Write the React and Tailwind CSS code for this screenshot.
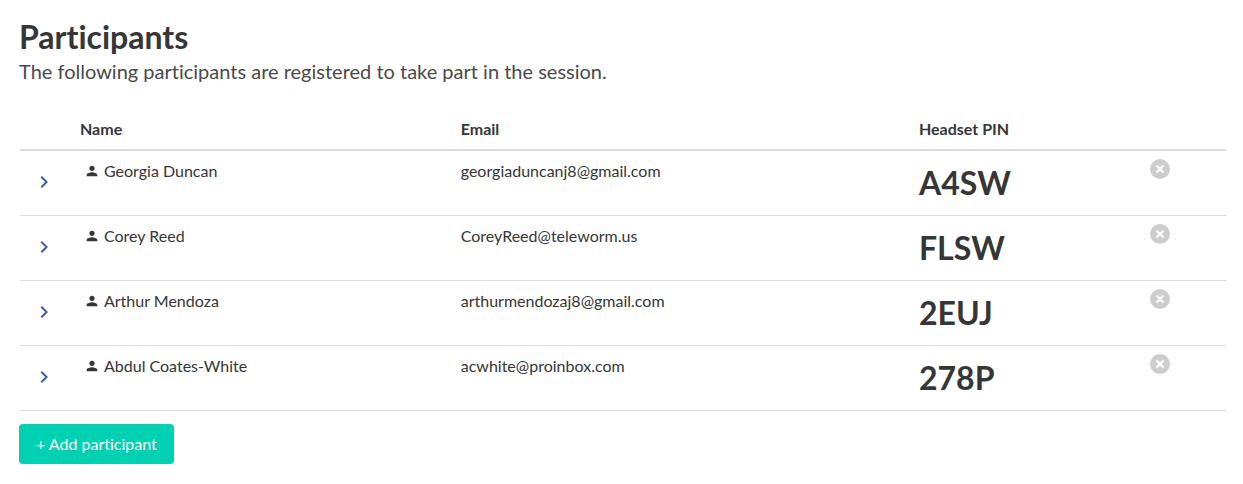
import { MdPerson, MdChevronRight } from "react-icons/md";

const participants = [
  { name: "Georgia Duncan", email: "georgiaduncanj8@gmail.com", pin: "A4SW" },
  { name: "Corey Reed", email: "CoreyReed@teleworm.us", pin: "FLSW" },
  { name: "Arthur Mendoza", email: "arthurmendozaj8@gmail.com", pin: "2EUJ" },
  { name: "Abdul Coates-White", email: "acwhite@proinbox.com", pin: "278P" },
];

function ParticipantRow({ name, email, pin }) {
  return (
    <tr className="border-b border-[#dbdbdb] align-top">
      <td className="px-3 pt-2 pb-2.5 align-middle">
        <button type="button" aria-label={`Show details of ${name}`} className="flex size-6 items-center justify-center text-[#3f5da3]">
          <MdChevronRight className="size-6" />
        </button>
      </td>
      <td className="px-3 py-2">
        <div className="flex items-center">
          <span className="flex w-6 justify-center">
            <MdPerson className="size-4" />
          </span>
          {name}
        </div>
      </td>
      <td className="px-3 py-2">{email}</td>
      <td className="px-3 py-2 text-[32px] leading-12 font-bold">{pin}</td>
      <td className="px-3 py-2">
        <button type="button" aria-label={`Remove ${name}`} className="flex size-5 items-center justify-center rounded-full bg-[#cdcdcd] text-white">
          <svg viewBox="0 0 20 20" className="size-5" fill="none" stroke="currentColor" strokeWidth="2.2">
            <path d="M6.5 6.5l7 7M13.5 6.5l-7 7" />
          </svg>
        </button>
      </td>
    </tr>
  );
}

export default function App() {
  return (
    <main className="pt-[19px] pr-[17px] pb-5 pl-[19px] font-['Lato',sans-serif] text-base text-[#363636] [font-variant-ligatures:none]">
      <h1 className="text-[32px] leading-9 font-bold">Participants</h1>
      <p className="text-xl leading-8 text-[#4a4a4a]">The following participants are registered to take part in the session.</p>
      <div className="mt-[22px] pl-px">
        <table className="w-full table-fixed border-collapse text-left">
          <colgroup>
            <col className="w-12" />
            <col />
            <col className="w-[38%]" />
            <col className="w-[231px]" />
            <col className="w-22" />
          </colgroup>
          <thead>
            <tr className="border-b-2 border-[#dbdbdb]">
              <td />
              <th className="px-3 py-2 font-bold">Name</th>
              <th className="px-3 py-2 font-bold">Email</th>
              <th className="px-3 py-2 font-bold">Headset PIN</th>
              <td />
            </tr>
          </thead>
          <tbody>
            {participants.map((participant) => (
              <ParticipantRow key={participant.email} {...participant} />
            ))}
          </tbody>
        </table>
      </div>
      <button type="button" className="mt-[13px] h-10 rounded bg-[#00d1b2] px-[17px] text-white">
        + Add participant
      </button>
    </main>
  );
}
